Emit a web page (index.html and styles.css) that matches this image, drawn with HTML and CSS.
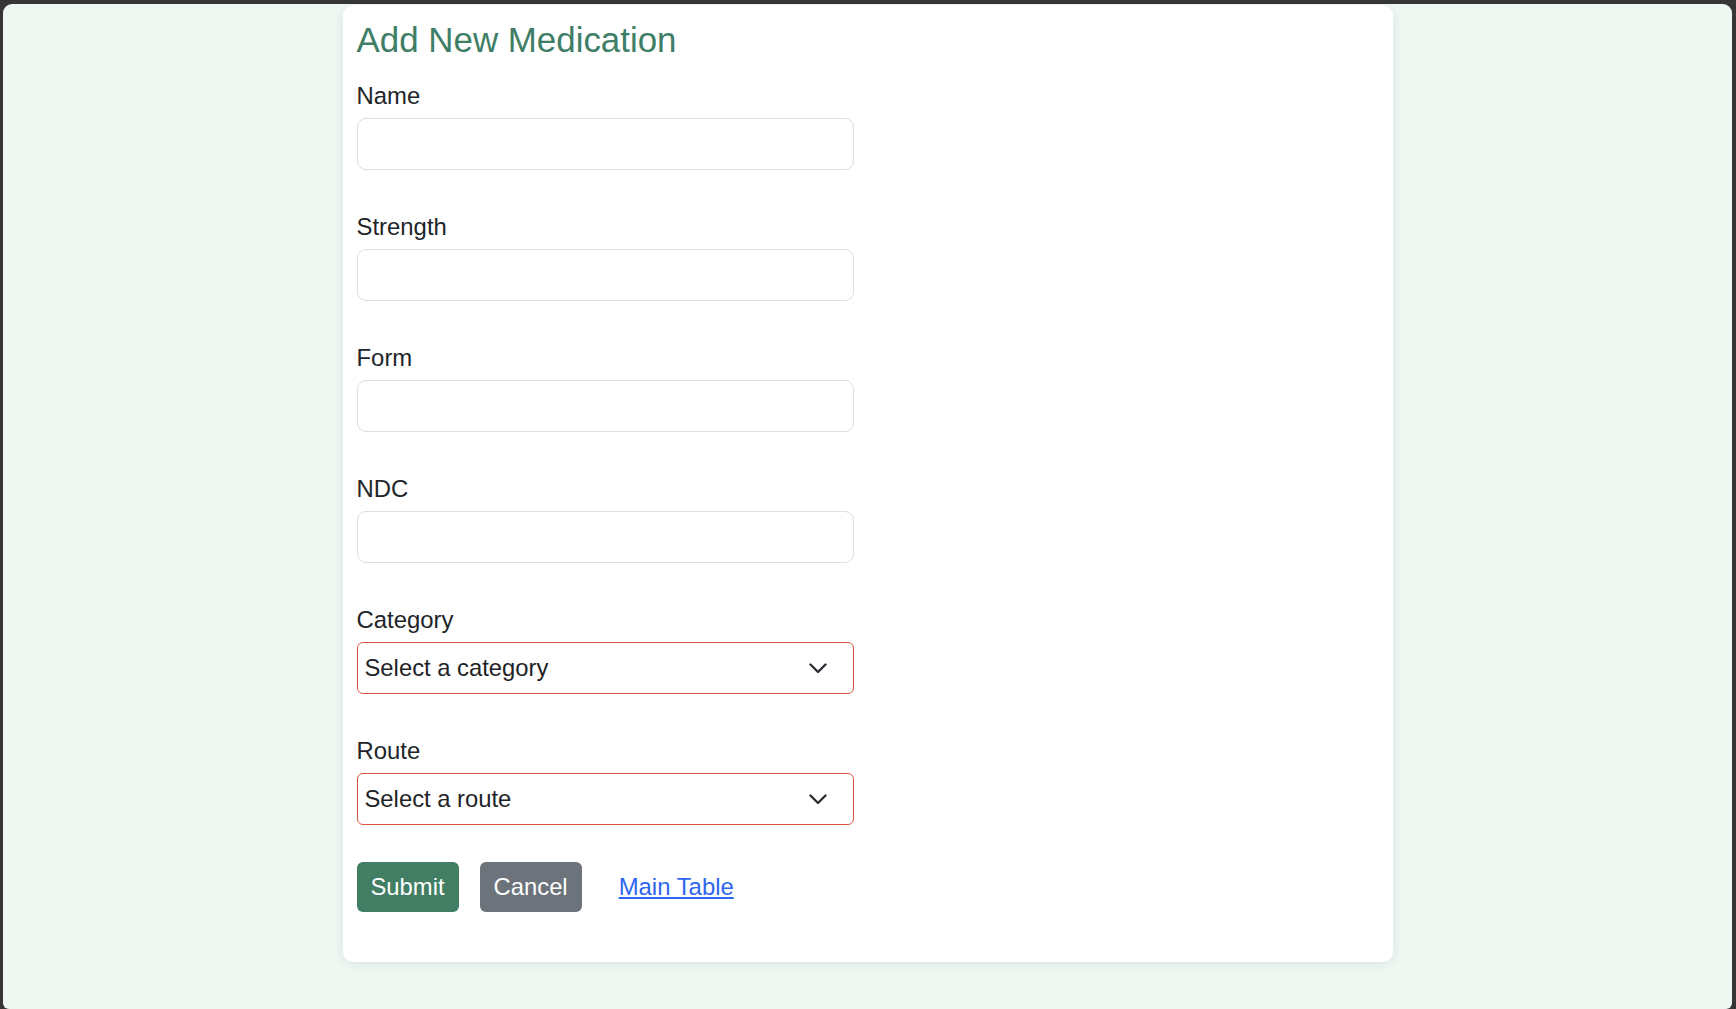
FILE: index.html
```html
<!DOCTYPE html>
<html lang="en">
<head>
<meta charset="utf-8">
<title>Add New Medication</title>
<link rel="stylesheet" href="styles.css">
</head>
<body>
<div class="window">
  <main class="card">
    <h1 class="title">Add New Medication</h1>
    <form class="form">
      <div class="field">
        <label class="label" for="name">Name</label>
        <input class="input" id="name" type="text">
      </div>
      <div class="field">
        <label class="label" for="strength">Strength</label>
        <input class="input" id="strength" type="text">
      </div>
      <div class="field">
        <label class="label" for="form">Form</label>
        <input class="input" id="form" type="text">
      </div>
      <div class="field">
        <label class="label" for="ndc">NDC</label>
        <input class="input" id="ndc" type="text">
      </div>
      <div class="field">
        <label class="label" for="category">Category</label>
        <div class="select-wrap">
          <select class="select" id="category">
            <option>Select a category</option>
          </select>
          <svg class="chevron" width="18" height="11" viewBox="0 0 18 11" aria-hidden="true"><path d="M1.5 1.5 L9 9 L16.5 1.5" fill="none" stroke="#2b2f33" stroke-width="2.4" stroke-linecap="round" stroke-linejoin="round"/></svg>
        </div>
      </div>
      <div class="field">
        <label class="label" for="route">Route</label>
        <div class="select-wrap">
          <select class="select" id="route">
            <option>Select a route</option>
          </select>
          <svg class="chevron" width="18" height="11" viewBox="0 0 18 11" aria-hidden="true"><path d="M1.5 1.5 L9 9 L16.5 1.5" fill="none" stroke="#2b2f33" stroke-width="2.4" stroke-linecap="round" stroke-linejoin="round"/></svg>
        </div>
      </div>
      <div class="actions">
        <button class="btn btn-primary" type="button">Submit</button>
        <button class="btn btn-secondary" type="button">Cancel</button>
        <a class="link" href="#">Main Table</a>
      </div>
    </form>
  </main>
</div>
</body>
</html>
```

FILE: styles.css
```css
html {
  background: #363636;
  height: 100%;
}

body {
  margin: 0;
  padding: 4px 4px 0 3px;
  height: 100%;
  box-sizing: border-box;
  font-family: "Liberation Sans", Arial, sans-serif;
}

.window {
  height: 100%;
  background: #eef7f2;
  border-radius: 9px 9px 6px 6px;
  overflow: hidden;
  padding-top: 1px;
  box-sizing: border-box;
}

.card {
  width: 1050px;
  margin: 0 auto;
  background: #ffffff;
  border-radius: 10px;
  box-shadow: 0 2px 12px rgba(0, 0, 0, 0.08);
  padding: 15px 14px 50px;
  box-sizing: border-box;
}

.title {
  margin: 0 0 21px;
  font-size: 34.9px;
  line-height: 40px;
  font-weight: normal;
  color: #3f7e66;
}

.form {
  display: flex;
  flex-direction: column;
  width: 497px;
}

.field {
  display: flex;
  flex-direction: column;
}

.field + .field {
  margin-top: 42.5px;
}

.label {
  font-size: 23.9px;
  line-height: 27px;
  padding-top: 1px;
  color: #212529;
  margin-bottom: 9px;
}

.input {
  height: 51.5px;
  box-sizing: border-box;
  border: 1px solid #dedede;
  border-radius: 9px;
  background: #ffffff;
  font: inherit;
  font-size: 23.9px;
  padding: 0 7px;
  outline: none;
}

.select-wrap {
  position: relative;
}

.select {
  display: block;
  width: 100%;
  height: 51.5px;
  box-sizing: border-box;
  border: 1px solid #dd5442;
  border-radius: 6px;
  background: #ffffff;
  font-family: "Liberation Sans", Arial, sans-serif;
  font-size: 23.8px;
  color: #1f2326;
  padding: 0 40px 0 7px;
  appearance: none;
  -webkit-appearance: none;
  outline: none;
}

.chevron {
  position: absolute;
  right: 27px;
  top: 20.5px;
  pointer-events: none;
}

.actions {
  display: flex;
  align-items: center;
  margin-top: 37px;
}

.btn {
  height: 50px;
  padding: 1px 14px 0;
  border: none;
  border-radius: 6px;
  color: #ffffff;
  font-family: "Liberation Sans", Arial, sans-serif;
  font-size: 23.8px;
  cursor: pointer;
}

.btn-primary {
  background: #427e63;
}

.btn-secondary {
  background: #6c737b;
  margin-left: 21px;
}

.link {
  margin-left: 37px;
  font-size: 23.9px;
  color: #2f66f0;
  text-decoration: underline;
}
```
